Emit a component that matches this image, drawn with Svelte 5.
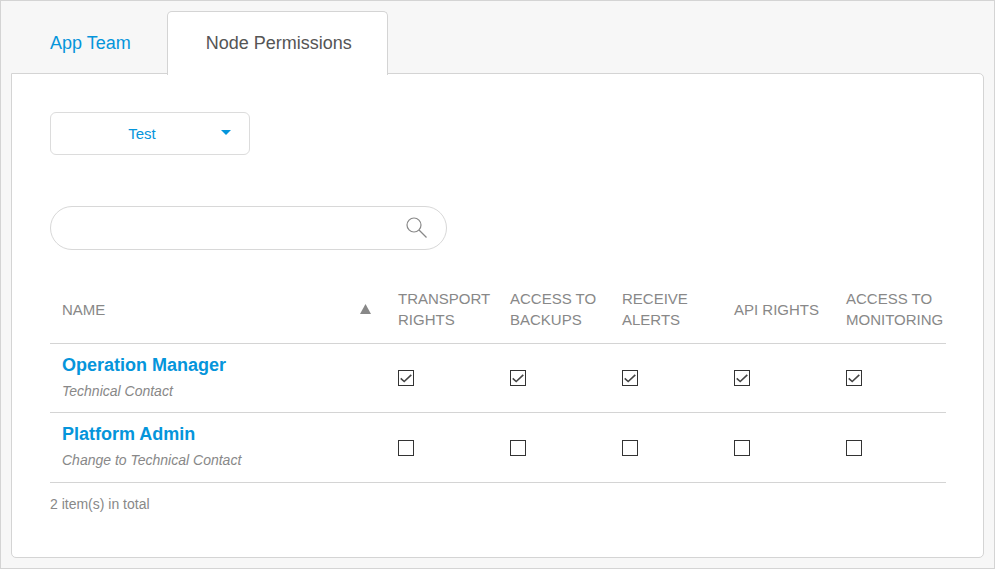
<script>
  const permissions = [
    'Transport Rights',
    'Access to Backups',
    'Receive Alerts',
    'API Rights',
    'Access to Monitoring',
  ];

  let roles = $state([
    { name: 'Operation Manager', note: 'Technical Contact', granted: [true, true, true, true, true] },
    { name: 'Platform Admin', note: 'Change to Technical Contact', granted: [false, false, false, false, false] },
  ]);
  let query = $state('');
  let node = $state('Test');
  let ascending = $state(true);

  const visible = $derived(
    roles
      .filter((role) => role.name.toLowerCase().includes(query.toLowerCase()))
      .sort((a, b) => (ascending ? 1 : -1) * a.name.localeCompare(b.name))
  );
</script>

<main class="page">
  <nav class="tabs">
    <a class="tab" href="#team">App Team</a>
    <a class="tab active" href="#permissions" aria-current="page">Node Permissions</a>
  </nav>

  <section class="panel">
    <div class="node">
      <select aria-label="Node" bind:value={node}>
        <option>Test</option>
        <option>Acceptance</option>
        <option>Production</option>
      </select>
      <svg class="caret" width="10" height="5" viewBox="0 0 10 5" aria-hidden="true">
        <path d="M0 0h10L5 5z" fill="currentColor" />
      </svg>
    </div>

    <div class="search">
      <input type="text" aria-label="Search" bind:value={query} />
      <button type="button" aria-label="Search">
        <svg width="22" height="22" viewBox="0 0 22 22" fill="none" stroke="currentColor" stroke-width="1.200">
          <circle cx="8" cy="8" r="7" />
          <path d="M13 13l7.500 7.500" />
        </svg>
      </button>
    </div>

    <table>
      <thead>
        <tr>
          <th class="name-column" scope="col">
            <div class="sortable">
              <span>Name</span>
              <button type="button" aria-label="Sort by name" onclick={() => (ascending = !ascending)}>
                <svg width="11" height="10" viewBox="0 0 11 10" class:down={!ascending}>
                  <path d="M5.500 0L11 10H0z" fill="currentColor" />
                </svg>
              </button>
            </div>
          </th>
          {#each permissions as permission}
            <th scope="col">{permission}</th>
          {/each}
        </tr>
      </thead>
      <tbody>
        {#each visible as role (role.name)}
          <tr>
            <td>
              <a class="role" href="#role">{role.name}</a>
              <span class="note">{role.note}</span>
            </td>
            {#each permissions as permission, i}
              <td>
                <label class="check">
                  <input type="checkbox" aria-label="{role.name}: {permission}" bind:checked={role.granted[i]} />
                  <svg width="16" height="16" viewBox="0 0 16 16" aria-hidden="true">
                    <path d="M2.700 8.300l3.500 3.200L13.300 4.900" fill="none" stroke="#444" stroke-width="1.600" />
                  </svg>
                </label>
              </td>
            {/each}
          </tr>
        {/each}
      </tbody>
    </table>

    <p class="total">{visible.length} item(s) in total</p>
  </section>
</main>

<style>
  .page {
    box-sizing: border-box;
    min-height: 100vh;
    display: flex;
    flex-direction: column;
    padding: 10px;
    border: 1px solid #d4d4d4;
    background: #f7f7f7;
    color: #888;
    font: 15px/21px "Liberation Sans", Arial, sans-serif;
  }

  .tabs {
    display: flex;
  }

  .tab {
    padding: 21px 35px 19px 38px;
    border: 1px solid transparent;
    border-bottom: 0;
    color: #0595db;
    font-size: 18px;
    text-decoration: none;
  }

  .tab.active {
    z-index: 1;
    margin-bottom: -2px;
    padding-bottom: 21px;
    border-color: #d4d4d4;
    border-radius: 5px 5px 0 0;
    background: #fff;
    color: #555;
  }

  .panel {
    flex: 1;
    padding: 38px 37px 38px 38px;
    border: 1px solid #d4d4d4;
    border-radius: 0 5px 5px 5px;
    background: #fff;
  }

  .node {
    display: grid;
    align-items: center;
    width: 200px;
    color: #0595db;
  }

  .node > * {
    grid-area: 1 / 1;
  }

  select {
    appearance: none;
    height: 43px;
    padding: 0 16px 0 0;
    border: 1px solid #dcdcdc;
    border-radius: 6px;
    background: #fff;
    color: inherit;
    font: inherit;
    text-align-last: center;
  }

  .caret {
    justify-self: end;
    margin: 0 19px 2px 0;
    pointer-events: none;
  }

  .search {
    box-sizing: border-box;
    display: flex;
    align-items: center;
    max-width: 397px;
    height: 44px;
    margin: 51px 0 26px;
    padding: 0 18px 0 20px;
    border: 1px solid #d8d8d8;
    border-radius: 22px;
  }

  .search input {
    flex: 1;
    min-width: 0;
    padding: 0;
    border: 0;
    outline: 0;
    background: none;
    color: #555;
    font: inherit;
  }

  button {
    display: flex;
    padding: 0;
    border: 0;
    background: none;
    color: #888;
    cursor: pointer;
  }

  table {
    width: 100%;
    border-collapse: separate;
    border-spacing: 0;
    table-layout: fixed;
  }

  th,
  td {
    padding: 0 0 0 12px;
    border-bottom: 1px solid #d4d4d4;
    text-align: left;
    vertical-align: middle;
  }

  th {
    padding-top: 12px;
    padding-bottom: 13px;
    font-weight: normal;
    text-transform: uppercase;
  }

  .name-column {
    width: 37.5%;
    box-sizing: border-box;
  }

  .sortable {
    display: flex;
    align-items: center;
    justify-content: space-between;
    padding-right: 15px;
  }

  .down {
    transform: rotate(180deg);
  }

  td {
    box-sizing: border-box;
    height: 69px;
  }

  tr:last-child td {
    height: 70px;
  }

  .role,
  .note {
    display: block;
  }

  .role {
    margin-bottom: 5px;
    color: #0595db;
    font-size: 18px;
    font-weight: bold;
    text-decoration: none;
  }

  .note {
    font-size: 14px;
    font-style: italic;
  }

  .check {
    display: grid;
    width: 16px;
  }

  .check > * {
    grid-area: 1 / 1;
  }

  .check input {
    appearance: none;
    width: 16px;
    height: 16px;
    margin: 0;
    border: 1px solid #333;
    background: #fff;
  }

  .check svg {
    visibility: hidden;
    pointer-events: none;
  }

  .check input:checked + svg {
    visibility: visible;
  }

  .total {
    margin: 11px 0 0;
    font-size: 14px;
  }
</style>
